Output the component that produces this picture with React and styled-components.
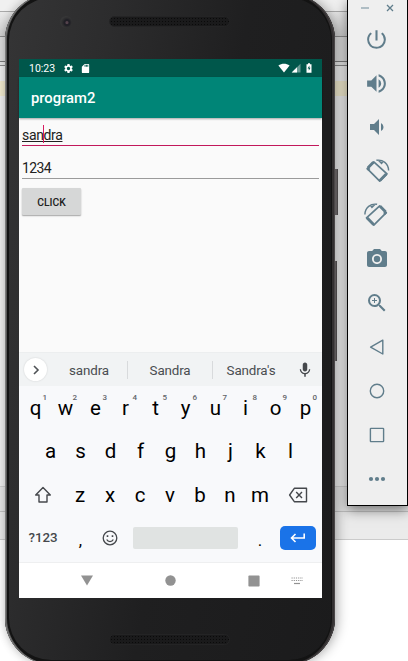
import React from "react";
import styled, { createGlobalStyle, css } from "styled-components";
import {
  MdPowerSettingsNew,
  MdVolumeUp,
  MdVolumeDown,
  MdCameraAlt,
  MdZoomIn,
  MdSettings,
  MdSdCard,
  MdMic,
} from "react-icons/md";

const Global = createGlobalStyle`
  *, *::before, *::after { box-sizing: border-box; }
  body { margin: 0; overflow: hidden; font-family: Roboto, "Liberation Sans", sans-serif; }
  svg { display: block; flex: none; }
`;

const Desktop = styled.main`
  position: relative;
  width: 408px;
  height: 661px;
  overflow: hidden;
  background: #fff;
`;

const Band = styled.div`
  height: ${(p) => p.$h}px;
  background: ${(p) => p.$bg};
  border-bottom: ${(p) => (p.$line ? `1px solid ${p.$line}` : "none")};
`;

/* Phone */
const Phone = styled.section`
  position: absolute;
  left: 5px;
  top: -6px;
  width: 330px;
  height: 670px;
  padding: 0 13px 0 14px;
  display: flex;
  flex-direction: column;
  border-radius: 46px;
  background: linear-gradient(100deg, #353536 0%, #2c2c2d 25%, #1f1f20 55%, #1b1b1c 100%);
  box-shadow:
    inset 1px 0 0 #7c7c7c,
    inset 2px 0 0 #5a5a5a,
    inset -1px 0 0 #4a4647,
    inset -3px 0 0 #322f30,
    inset 0 0 0 4px #131313,
    3px 0 12px rgba(0, 0, 0, 0.28),
    -2px 0 8px rgba(0, 0, 0, 0.1);
`;

const SideKey = styled.div`
  position: absolute;
  left: 335px;
  top: ${(p) => p.$y}px;
  width: ${(p) => p.$w}px;
  height: ${(p) => p.$h}px;
  background: #5c5859;
  border-right: 1px solid #474445;
`;

const TopBezel = styled.div`
  height: 65px;
  flex: none;
  display: grid;
  grid-template-columns: 90px 121px 1fr;
  padding-top: 22px;
`;

const BottomBezel = styled.div`
  height: 66px;
  padding: 36px 0 0 90px;
`;

const Camera = styled.div`
  width: 12px;
  height: 12px;
  margin-left: 41px;
  border-radius: 50%;
  background: radial-gradient(circle at 58% 55%, #54424c 0 1px, #201f26 2px 3px, #2a2a2c 4px, #363637 6px);
`;

const Grille = styled.div`
  width: 121px;
  height: 11px;
  border-radius: 6px;
  border: 1px solid #242425;
  background-color: #1a1a1b;
  background-image: radial-gradient(#0a0a0a 35%, transparent 45%);
  background-size: 3px 3px;
`;

const Screen = styled.div`
  width: 303px;
  height: 539px;
  flex: none;
  display: flex;
  flex-direction: column;
  background: #fafafa;
`;

const StatusBar = styled.header`
  height: 18px;
  flex: none;
  display: flex;
  align-items: center;
  padding: 0 10px 0 10px;
  background: #00574b;
  color: #fff;
  font-size: 10.5px;
`;

const Clock = styled.span`
  width: 34px;
`;

const StatusIcon = styled.span`
  display: flex;
  margin-right: ${(p) => p.$gap || 0}px;
`;

const StatusRight = styled.div`
  display: flex;
  align-items: center;
  margin-left: auto;
`;

const AppBar = styled.div`
  height: 41px;
  flex: none;
  display: flex;
  align-items: center;
  padding: 1px 12px 0;
  background: #008577;
  color: #fff;
  font-size: 14.8px;
  font-weight: 500;
  box-shadow: 0 1px 2px rgba(0, 0, 0, 0.35);
`;

const Content = styled.div`
  flex: 1;
  padding: 0 3px;
`;

const Field = styled.div`
  height: ${(p) => p.$h}px;
  display: flex;
  align-items: flex-end;
  padding-bottom: ${(p) => p.$pb}px;
  border-bottom: 1px solid ${(p) => p.$line};
  color: #212121;
  font-size: 14px;
  letter-spacing: ${(p) => p.$tracking}px;
  line-height: 16px;
`;

const Typed = styled.span`
  position: relative;
  text-decoration: ${(p) => (p.$underline ? "underline" : "none")};
  text-underline-offset: 1px;
`;

const Caret = styled.i`
  position: absolute;
  left: 21px;
  top: -2px;
  width: 1px;
  height: 18px;
  background: #d81b60;
`;

const ClickButton = styled.button`
  display: flex;
  align-items: center;
  justify-content: center;
  width: 59px;
  height: 27px;
  margin-top: 9px;
  padding: 1px 0 0;
  border: 0;
  border-radius: 1px;
  background: #d6d7d7;
  box-shadow: 0 1px 1.5px rgba(0, 0, 0, 0.35);
  color: #212121;
  font: 500 10.3px Roboto, sans-serif;
`;

/* Keyboard */
const Suggestions = styled.div`
  height: 34px;
  flex: none;
  display: grid;
  grid-template-columns: 32px 77px 85px 76px 33px;
  align-items: center;
  background: #f1f3f4;
  border-top: 1px solid #eceeef;
  color: #4a4d51;
  font-size: 13.4px;
  letter-spacing: -0.15px;
`;

const Expand = styled.div`
  width: 23px;
  height: 23px;
  margin-left: 5px;
  display: grid;
  place-items: center;
  border-radius: 50%;
  background: #fff;
  box-shadow: 0 0 2px rgba(0, 0, 0, 0.15);
`;

const Suggestion = styled.div`
  height: 18px;
  line-height: 19px;
  text-align: center;
  border-right: ${(p) => (p.$last ? "0" : "1px solid #d8dadc")};
`;

const MicCell = styled.div`
  display: grid;
  place-items: center;
  padding-right: 2px;
`;

const Keyboard = styled.div`
  height: 177px;
  flex: none;
  display: flex;
  flex-direction: column;
  background: #f8f9fb;
  border-bottom: 1px solid #eeeff0;
`;

const KeyRow = styled.div`
  height: ${(p) => p.$h || 43.6}px;
  display: flex;
  padding-left: ${(p) => p.$inset}px;
`;

const Key = styled.div`
  position: relative;
  width: ${(p) => p.$w || 30}px;
  display: flex;
  align-items: center;
  justify-content: center;
  color: #000;
  font-size: 20.5px;
  line-height: 24px;
  ${(p) =>
    p.$mode &&
    css`
      color: #45484c;
      font-size: 13.3px;
      font-weight: 500;
    `}
  ${(p) =>
    p.$punct &&
    css`
      padding-top: 4px;
      font-size: 17px;
    `}
`;

const Hint = styled.sup`
  position: absolute;
  left: 22px;
  top: 7px;
  color: #5f6368;
  font-size: 8px;
  font-weight: 500;
  line-height: 10px;
`;

const SpaceBar = styled.div`
  width: 105px;
  height: 22px;
  align-self: center;
  border-radius: 2px;
  background: #e0e3e2;
`;

const Enter = styled.div`
  width: 36px;
  height: 24px;
  margin-left: 7px;
  align-self: center;
  display: grid;
  place-items: center;
  border-radius: 5px;
  background: #1a73e8;
`;

const NavBar = styled.nav`
  height: 35px;
  flex: none;
  display: flex;
  align-items: center;
  padding: 0 0 0 61.5px;
  background: #fff;
`;

const NavItem = styled.div`
  margin-right: ${(p) => p.$gap || 0}px;
`;

/* Emulator control panel */
const Panel = styled.aside`
  position: absolute;
  left: 347px;
  top: -1px;
  width: 61px;
  height: 507px;
  border: 1px solid #000;
  background: #efefef;
  color: #607d8b;
  box-shadow: 0 4px 12px rgba(0, 0, 0, 0.5);
`;

const WindowControls = styled.div`
  height: 17px;
  display: flex;
  justify-content: flex-end;
  align-items: center;
  gap: 17px;
  padding: 0 13px 1px 0;
`;

const Tool = styled.div`
  height: 44px;
  display: grid;
  place-items: center;
  padding-right: 2px;
`;

const Rotate = ({ flip }) => (
  <svg width="26" height="26" viewBox="0 0 26 26">
    <g transform={flip ? "translate(25.5 0) scale(-1 1)" : undefined} fill="none" stroke="currentColor">
      <path d="M9.8 3.9 3.2 10.7 15.7 23.2 23 15.9Z" strokeWidth="1.7" strokeLinejoin="round" />
      <path d="M3.6 10.3 5.4 12.1M9.4 4.2 4 9.8M15.9 22.4 22.2 16.1" strokeWidth="2.8" />
      <path d="M12.4 2.3C18.8 1.2 24.4 5.6 24.6 12.4" strokeWidth="1.4" />
      <path d="M13.4 2.2 17.6 6.4 19.4 4.2Z" fill="currentColor" stroke="none" />
    </g>
  </svg>
);

const Outline = ({ children }) => (
  <svg width="18" height="18" viewBox="0 0 18 18" fill="none" stroke="currentColor" strokeWidth="1.4">
    {children}
  </svg>
);

const tools = [
  <MdPowerSettingsNew size={25} />,
  <MdVolumeUp size={25} />,
  <MdVolumeDown size={24} />,
  <Rotate />,
  <Rotate flip />,
  <MdCameraAlt size={24} />,
  <MdZoomIn size={24} />,
  <Outline><path d="M14.8 2.2V16L2.6 9.1Z" strokeLinejoin="round" /></Outline>,
  <Outline><circle cx="9" cy="9" r="6.7" /></Outline>,
  <Outline><rect x="2.4" y="2.4" width="13.2" height="13.2" rx="0.6" /></Outline>,
  <svg width="18" height="6" fill="currentColor">
    <circle cx="3" cy="3" r="2.1" />
    <circle cx="9" cy="3" r="2.1" />
    <circle cx="15" cy="3" r="2.1" />
  </svg>,
];

const bands = [
  [12, "#f0f0f0", "#a9a9a9"],
  [25, "linear-gradient(#e9e9e9, #d2d2d2)", "#8f8f8f"],
  [25, "#dedede", "#7d7d7d"],
  [4, "#e8e8e8", "#8c8c8c"],
  [15, "#f0f0f0"],
  [15, "#f3ecd0"],
  [391, "#f0f0f0", "#d2d2d2"],
  [25, "#e7e7e7", "#c4c4c4"],
  [28, "#ebebeb", "#cbcbcb"],
];

export default function App() {
  return (
    <Desktop>
      <Global />
      {bands.map(([h, bg, line], i) => (
        <Band key={i} $h={h} $bg={bg} $line={line} />
      ))}

      <Panel>
        <WindowControls>
          <svg width="8" height="8" stroke="#9fb1ba" strokeWidth="1.6"><path d="M0 4H8" /></svg>
          <svg width="8" height="8" stroke="currentColor" strokeWidth="1.3"><path d="M1 1 7 7M7 1 1 7" /></svg>
        </WindowControls>
        {tools.map((icon, i) => (
          <Tool key={i}>{icon}</Tool>
        ))}
      </Panel>

      <Phone>
        <TopBezel>
          <Camera />
          <Grille />
        </TopBezel>
        <Screen>
          <StatusBar>
            <Clock>10:23</Clock>
            <StatusIcon $gap={5.5}><MdSettings size={11} /></StatusIcon>
            <StatusIcon><MdSdCard size={11} /></StatusIcon>
            <StatusRight>
              <StatusIcon $gap={1}>
                <svg width="12" height="10" fill="#fff"><path d="M.4 2.6C3.8 0 8.2 0 11.6 2.6L6 9.4Z" /></svg>
              </StatusIcon>
              <StatusIcon $gap={5}>
                <svg width="10" height="10" fill="#fff">
                  <path d="M9.5.7V9.5H.7Z" opacity=".4" />
                  <path d="M6 4.2V9.5H.7Z" />
                </svg>
              </StatusIcon>
              <StatusIcon>
                <svg width="6" height="10">
                  <path d="M.5 1.3H2V.3H4V1.3H5.5V9.7H.5Z" fill="#fff" />
                  <path d="M3.4 2.4 1.6 5.5H2.8V7.8L4.5 4.7H3.4Z" fill="#00574b" />
                </svg>
              </StatusIcon>
            </StatusRight>
          </StatusBar>
          <AppBar>program2</AppBar>
          <Content>
            <Field $h={28} $pb={2} $tracking={-0.35} $line="#c2185b">
              <Typed $underline>sandra<Caret /></Typed>
            </Field>
            <Field $h={33} $pb={2} $tracking={-0.6} $line="#9a9a9a"><Typed>1234</Typed></Field>
            <ClickButton>CLICK</ClickButton>
          </Content>

          <Suggestions>
            <Expand>
              <svg width="8" height="10" fill="none" stroke="#4f5256" strokeWidth="1.6"><path d="M2 1 6 5 2 9" /></svg>
            </Expand>
            <Suggestion>sandra</Suggestion>
            <Suggestion>Sandra</Suggestion>
            <Suggestion $last>Sandra's</Suggestion>
            <MicCell><MdMic size={18} color="#45484c" /></MicCell>
          </Suggestions>

          <Keyboard>
            <KeyRow $inset={1.5}>
              {[..."qwertyuiop"].map((k, i) => (
                <Key key={k}>{k}<Hint>{(i + 1) % 10}</Hint></Key>
              ))}
            </KeyRow>
            <KeyRow $inset={16.5}>
              {[..."asdfghjkl"].map((k) => <Key key={k}>{k}</Key>)}
            </KeyRow>
            <KeyRow $inset={2}>
              <Key $w={44}>
                <svg width="18" height="18" fill="none" stroke="#45484c" strokeWidth="1.4" strokeLinejoin="round">
                  <path d="M9 1.5 1.7 9H5V16H13V9H16.3Z" />
                </svg>
              </Key>
              {[..."zxcvbnm"].map((k) => <Key key={k}>{k}</Key>)}
              <Key $w={45}>
                <svg width="20" height="16" fill="none" stroke="#45484c" strokeWidth="1.4">
                  <path d="M6.3 1.3H18.5V14.7H6.3L1.6 8Z" strokeLinejoin="round" />
                  <path d="M8.2 5 14 11M14 5 8.2 11" />
                </svg>
              </Key>
            </KeyRow>
            <KeyRow $inset={2} $h={42}>
              <Key $w={44} $mode>?123</Key>
              <Key $w={31} $punct>,</Key>
              <Key $w={28}>
                <svg width="16" height="16" fill="none" stroke="#45484c" strokeWidth="1.3">
                  <circle cx="8" cy="8" r="6.8" />
                  <path d="M4.7 9.5C6 12.2 10 12.2 11.3 9.5" />
                  <path d="M5.5 5.2V7M10.5 5.2V7" strokeWidth="1.6" />
                </svg>
              </Key>
              <Key $w={123}><SpaceBar /></Key>
              <Key $w={26} $punct>.</Key>
              <Enter>
                <svg width="16" height="11" fill="none" stroke="#fff" strokeWidth="1.6">
                  <path d="M14.2 1.5V6H2M5.5 2 1.5 6 5.5 10" />
                </svg>
              </Enter>
            </KeyRow>
          </Keyboard>

          <NavBar>
            <NavItem $gap={72}><svg width="12" height="11" fill="#929292"><path d="M0 .5H12L6 10.5Z" /></svg></NavItem>
            <NavItem $gap={72.5}><svg width="11" height="11" fill="#929292"><circle cx="5.5" cy="5.5" r="5.2" /></svg></NavItem>
            <NavItem $gap={30.5}><svg width="12" height="12" fill="#929292"><rect x=".4" y=".6" width="11.2" height="11" rx=".8" /></svg></NavItem>
            <NavItem>
              <svg width="12" height="8" stroke="#929292" strokeWidth="1.2">
                <path d="M.5 1H12M.5 3.5H12" strokeDasharray="1.2 1" />
                <path d="M3 6.5H9" />
              </svg>
            </NavItem>
          </NavBar>
        </Screen>
        <BottomBezel><Grille /></BottomBezel>
      </Phone>

      <SideKey $y={169} $w={3} $h={46} />
      <SideKey $y={261} $w={2} $h={100} />
    </Desktop>
  );
}
